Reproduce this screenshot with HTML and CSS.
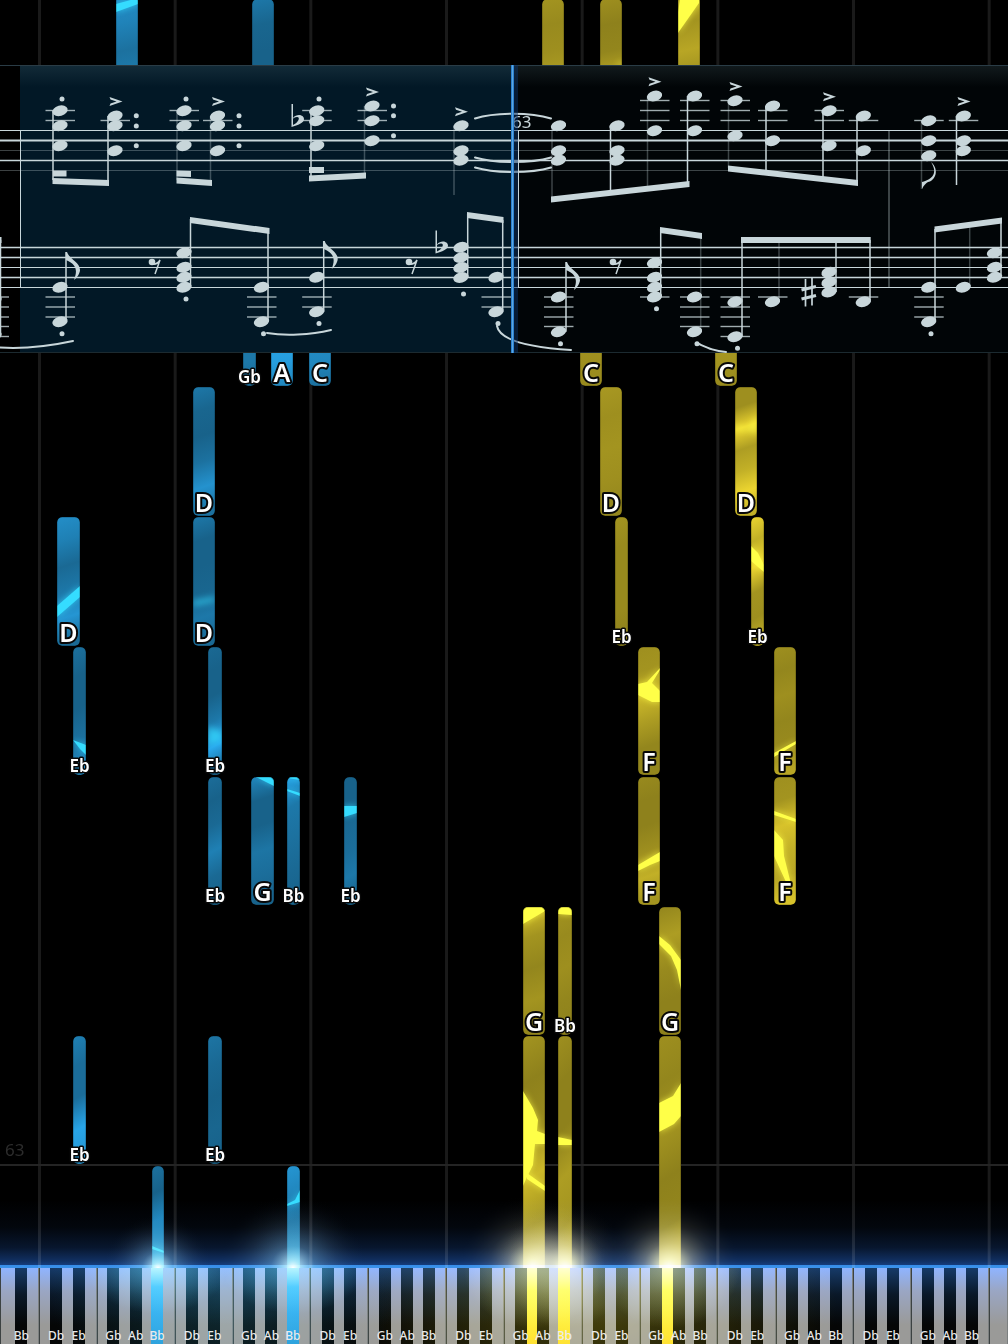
FILE: index.html
```html
<!DOCTYPE html>
<html lang="en">
<head>
    <meta charset="UTF-8">
    <meta name="viewport" content="width=device-width, initial-scale=1.0">
    <title>Piano roll</title>
    <link rel="stylesheet" href="styles.css">
</head>
<body>
    <main class="player">
        <svg class="roll" id="rollTop" viewBox="0 0 1008 65"></svg>
        <svg class="score" id="score" viewBox="0 65 1008 288"></svg>
        <svg class="roll" id="rollMain" viewBox="0 353 1008 915"></svg>
        <div class="keyboard" id="keyboard"></div>
    </main>
    <script src="script.js"></script>
</body>
</html>
```

FILE: styles.css
```css
body {
    margin: 0;
    background-color: #000;
    font-family: "Noto Sans", "Open Sans", sans-serif;
}
.player {
    display: flex;
    flex-direction: column;
    overflow: hidden;
}
.roll,
.score {
    display: block;
    width: 100%;
    height: auto;
}

/* falling notes */
.grid-line {
    stroke: #1a1a1a;
    stroke-width: 3;
}
.measure-line {
    stroke: #242424;
    stroke-width: 2;
}
.measure-label {
    fill: #2c2c2c;
    font-size: 17px;
}
.note-label {
    fill: #fff;
    stroke: #080808;
    stroke-width: 4px;
    stroke-linejoin: round;
    paint-order: stroke;
    font-size: 25px;
    font-weight: 600;
    text-anchor: middle;
}
.note-label.small {
    font-size: 17px;
    stroke-width: 3px;
}
.note-edge {
    fill: none;
    stroke: #000;
    stroke-opacity: 0.35;
}
.streak-left {
    fill: #35dcff;
}
.streak-right {
    fill: #ffff48;
}
.streak-soft {
    filter: blur(3px);
    opacity: 0.7;
}
.glow {
    mix-blend-mode: screen;
}

/* sheet music */
.ink {
    fill: #c8d6da;
}
.line {
    fill: none;
    stroke: #c8d6da;
}
.faint {
    stroke-opacity: 0.3;
}
.ledger {
    stroke-opacity: 0.8;
}
.score-label {
    fill: #c8d6da;
    font-size: 17px;
}

/* keyboard */
.keyboard {
    display: flex;
    position: relative;
    height: 76px;
    background-color: #333;
}
.slot {
    flex: 1;
    position: relative;
}
.key {
    box-sizing: border-box;
    height: 100%;
    margin: 0;
    padding: 0;
    border: none;
    font-family: "Noto Sans", "Open Sans", sans-serif;
}
.white {
    display: block;
    width: 100%;
    border-left: 1px solid #3c4242;
    border-right: 1px solid #7c8080;
    background: linear-gradient(#8fb4ff, #9aa6c4 30%, #9a9a98 75%);
}
.black {
    position: absolute;
    top: 0;
    left: 100%;
    z-index: 1;
    display: flex;
    align-items: flex-end;
    justify-content: center;
    width: 12px;
    margin-left: -6px;
    background: linear-gradient(#163a68, #0a1828 35%, #050606 75%);
    color: #e8e8e8;
    font-size: 12px;
    font-weight: 500;
    line-height: 16px;
}
.black.db {
    margin-left: -8px;
}
.black.eb {
    margin-left: -5px;
}
.black.gb {
    margin-left: -9px;
}
.black.bb {
    margin-left: -4px;
}
.white.left-hand,
.black.left-hand {
    background: linear-gradient(#a8ecff, #3cb8ff 25%, #2a9cda);
}
.white.right-hand,
.black.right-hand {
    background: linear-gradient(#ffffc0, #ffff48 30%, #ffdc30);
}
.keyboard::after {
    content: "";
    position: absolute;
    inset: 0;
    z-index: 2;
    pointer-events: none;
    mix-blend-mode: screen;
    background:
        radial-gradient(ellipse 7% 60% at 15.6% 0, rgba(90, 200, 240, 0.5), transparent),
        radial-gradient(ellipse 7% 60% at 29.1% 0, rgba(90, 200, 240, 0.5), transparent),
        radial-gradient(ellipse 7% 80% at 53% 0, rgba(240, 240, 120, 0.5), transparent),
        radial-gradient(ellipse 6% 80% at 56.2% 0, rgba(240, 240, 120, 0.4), transparent),
        radial-gradient(ellipse 7% 80% at 66.4% 0, rgba(240, 240, 120, 0.5), transparent),
        radial-gradient(ellipse 17% 180% at 22% 30%, rgba(20, 75, 90, 0.55), transparent),
        radial-gradient(ellipse 24% 180% at 59% 50%, rgba(115, 105, 10, 0.6), transparent);
}
```

FILE: script.js
```js
const SVG_NS = 'http://www.w3.org/2000/svg';

function add(parent, tag, attrs, text) {
    const el = document.createElementNS(SVG_NS, tag);
    for (const name in attrs) {
        el.setAttribute(name, attrs[name]);
    }
    if (text) {
        el.textContent = text;
    }
    parent.appendChild(el);
    return el;
}

/* ---------- falling notes ---------- */

const hands = {
    left: { dim: [24, 98, 138], bright: [42, 172, 242] },
    right: { dim: [142, 129, 28], bright: [246, 222, 50] }
};

function shade(hand, level) {
    const { dim, bright } = hands[hand];
    return 'rgb(' + dim.map((c, i) => Math.round(c + (bright[i] - c) * level)).join(',') + ')';
}

// x, top, width, bottom, hand, label, brightness from top to bottom, streaks, soft
const topNotes = [
    [116, -4, 22, 80, 'left', '', [0.6, 0.45, 0.2, 0.35], ['116,4 138,-2 138,4 116,12']],
    [252, -1, 22, 80, 'left', '', [0.3, 0.05, 0, 0]],
    [542, -1, 22, 80, 'right', '', [0.2, 0.1, 0.15, 0.3]],
    [600, -1, 22, 80, 'right', '', [0.15, 0, 0.05, 0.4], ['616,65 622,61 622,66'], 1],
    [678, -4, 22, 80, 'right', '', [0.5, 0.2, 0.4, 0.15], ['680,0 699,0 699,3 678,33 678,12']]
];

const notes = [
    [243, 340, 13, 386, 'left', 'Gb', [0.3, 0.3, 0.1]],
    [271, 340, 22, 386, 'left', 'A', [0.9, 0.8, 0.5]],
    [309, 340, 22, 386, 'left', 'C', [0.6, 0.5, 0.2]],
    [580, 340, 22, 386, 'right', 'C', [0.2, 0.15, 0.1]],
    [715, 340, 22, 386, 'right', 'C', [0.25, 0.2, 0.1]],
    [193, 387, 22, 516, 'left', 'D', [0.3, 0.05, 0, 0.2, 0.65, 0.2]],
    [600, 387, 22, 516, 'right', 'D', [0.25, 0.15, 0.2, 0.15, 0.05]],
    [735, 387, 22, 516, 'right', 'D', [0.15, 0.15, 0.9, 0.3, 0.5, 0.9, 0.5], ['735,426 749,427 757,416 757,434 749,430 735,431'], 1],
    [57, 517, 23, 646, 'left', 'D', [0.6, 0.4, 0.1, 0.3, 0.7, 0.1], ['57,606 80,586 80,597 57,617']],
    [193, 517, 22, 646, 'left', 'D', [0.3, 0, 0, 0.05, 0.3, 0.1], ['193,601 215,597 215,601 193,606'], 1],
    [615, 517, 13, 646, 'right', 'Eb', [0.2, 0.1, 0.1, 0.1, 0]],
    [751, 517, 13, 646, 'right', 'Eb', [0.9, 0.5, 0.9, 0.2, 0.15, 0.5], ['751,546 758,553 764,565 764,572 751,561']],
    [73, 647, 13, 775, 'left', 'Eb', [0.2, 0, 0, 0.2, 0.6], ['73,740 86,745 86,755 80,749']],
    [208, 647, 14, 775, 'left', 'Eb', [0.1, 0, 0, 0.3, 0.95, 0.1], ['208,727 222,731 222,741 208,745'], 1],
    [638, 647, 22, 775, 'right', 'F', [0.15, 0.2, 0.6, 0.3, 0.05, 0.05], ['638,684 647,682 660,668 660,670 652,683 660,691 660,702 652,702 638,695']],
    [774, 647, 22, 775, 'right', 'F', [0.15, 0.05, 0.15, 0.05, 0.1, 0.4], ['774,753 796,741 796,744 774,757']],
    [208, 777, 14, 905, 'left', 'Eb', [0.15, 0, 0.1, 0.4, 0.1, 0]],
    [251, 777, 23, 905, 'left', 'G', [0.5, 0, 0, 0.25, 0.15, 0], ['256,777 274,777 274,786']],
    [287, 777, 13, 905, 'left', 'Bb', [0.9, 0.3, 0.2, 0.1, 0], ['287,776 300,776 300,780 287,778', '287,789 300,793 300,796 287,791']],
    [344, 777, 13, 905, 'left', 'Eb', [0, 0, 0.1, 0.15, 0.3, 0], ['344,806 357,806 357,813 344,817']],
    [638, 777, 22, 905, 'right', 'F', [0.1, 0, 0, 0.15, 0.5, 0.2], ['638,865 660,852 660,861 650,865 638,871']],
    [774, 777, 22, 905, 'right', 'F', [0.15, 0.2, 0.7, 0.5, 0.4, 0.7], ['774,811 796,819 796,822 774,815', '774,830 783,840 784,856 791,884 786,882 774,856']],
    [523, 907, 22, 1035, 'right', 'G', [0.7, 0.2, 0.05, 0.2, 0.05], ['523,907 545,907 545,911 523,924']],
    [558, 907, 14, 1035, 'right', 'Bb', [0.2, 0.1, 0.15, 0.05, 0], ['558,907 572,907 572,915 558,914']],
    [659, 907, 22, 1035, 'right', 'G', [0.05, 0.3, 0.1, 0, 0], ['659,936 670,945 681,960 681,990 677,970 671,956 659,944']],
    [73, 1036, 13, 1164, 'left', 'Eb', [0.4, 0.15, 0.15, 0.9, 0.7]],
    [208, 1036, 14, 1164, 'left', 'Eb', [0.25, 0.1, 0, 0.05, 0]],
    [523, 1036, 22, 1280, 'right', '', [0.2, 0, 0.1, 0.6, 0.2, 0.5], ['523,1091 533,1108 538,1120 537,1131 545,1134 545,1144 535,1144 533,1165 527,1177 523,1186', '527,1173 545,1186 545,1191 527,1179']],
    [558, 1036, 14, 1280, 'right', '', [0.15, 0, 0, 0.3, 0.2, 0.6], ['558,1137 572,1140 572,1145 558,1145']],
    [659, 1036, 22, 1280, 'right', '', [0.15, 0.05, 0.2, 0, 0.05, 0.8], ['659,1103 673,1096 681,1083 681,1116 674,1124 659,1132']],
    [152, 1166, 12, 1280, 'left', '', [0.2, 0, 0.5, 0.5, 1], ['152,1246 164,1251 164,1253 152,1249']],
    [287, 1166, 13, 1280, 'left', '', [0.7, 0.5, 0.2, 0.3, 1], ['287,1204 295,1200 300,1190 300,1202 287,1206']]
];

let noteId = 0;

function drawNote(svg, defs, note) {
    const [x, top, width, bottom, hand, label, levels, streaks = [], soft] = note;
    const id = 'note' + noteId++;
    const gradient = add(defs, 'linearGradient', { id: id + 'fill', x1: 0, y1: 0, x2: 0.06, y2: 1 });
    levels.forEach((level, i) => {
        add(gradient, 'stop', { offset: i / (levels.length - 1), 'stop-color': shade(hand, level) });
    });
    const box = { x: x, y: top, width: width, height: bottom - top, rx: 5 };
    const clip = add(defs, 'clipPath', { id: id + 'clip' });
    add(clip, 'rect', box);

    const group = add(svg, 'g', { 'clip-path': `url(#${id}clip)` });
    add(group, 'rect', { ...box, fill: `url(#${id}fill)` });
    streaks.forEach(points => {
        add(group, 'polygon', { points: points, class: `streak-${hand} streak-soft` });
        if (!soft) {
            add(group, 'polygon', { points: points, class: `streak-${hand}` });
        }
    });
    add(group, 'rect', { ...box, class: 'note-edge' });

    if (label) {
        const small = label.length > 1;
        add(svg, 'text', {
            x: x + width / 2,
            y: bottom - (small ? 3 : 4),
            class: small ? 'note-label small' : 'note-label'
        }, label);
    }
}

function drawRoll(svg, list, top, bottom) {
    const defs = add(svg, 'defs', {});
    for (let i = 0; i < 8; i++) {
        const x = 39.5 + i * 135.67;
        add(svg, 'line', { x1: x, x2: x, y1: top, y2: bottom, class: 'grid-line' });
    }
    if (bottom > 1165) {
        add(svg, 'line', { x1: 0, x2: 1008, y1: 1165, y2: 1165, class: 'measure-line' });
        add(svg, 'text', { x: 5, y: 1156, class: 'measure-label' }, '63');
    }
    list.forEach(note => drawNote(svg, defs, note));
    return defs;
}

function radial(defs, id, stops) {
    const gradient = add(defs, 'radialGradient', { id: id });
    stops.forEach(([offset, color, opacity]) => {
        add(gradient, 'stop', { offset: offset, 'stop-color': color, 'stop-opacity': opacity });
    });
}

drawRoll(document.getElementById('rollTop'), topNotes, 0, 65);

const rollMain = document.getElementById('rollMain');
const defs = drawRoll(rollMain, notes, 353, 1268);

// light coming off the keyboard
const haze = add(defs, 'linearGradient', { id: 'haze', x1: 0, y1: 0, x2: 0, y2: 1 });
[[0, 0], [0.4, 0.08], [0.7, 0.28], [0.9, 0.6], [1, 0.9]].forEach(([offset, opacity]) => {
    add(haze, 'stop', { offset: offset, 'stop-color': '#1c50a4', 'stop-opacity': opacity });
});
add(rollMain, 'rect', { x: 0, y: 1200, width: 1008, height: 68, fill: 'url(#haze)', class: 'glow' });
add(rollMain, 'rect', { x: 0, y: 1265, width: 1008, height: 3, fill: '#2468d0', class: 'glow' });

radial(defs, 'glowLeft', [[0, '#fff', 1], [0.1, '#b0e4ff', 0.8], [0.3, '#6aa0c8', 0.45], [0.6, '#50708a', 0.2], [1, '#000', 0]]);
radial(defs, 'glowRight', [[0, '#fff', 1], [0.12, '#ffffa8', 0.85], [0.35, '#c8c090', 0.45], [0.6, '#807a60', 0.2], [1, '#000', 0]]);
[[158, 'Left', 54], [293, 'Left', 74], [533, 'Right', 74], [565, 'Right', 66], [669, 'Right', 72]].forEach(([x, side, r]) => {
    add(rollMain, 'ellipse', { cx: x, cy: 1268, rx: r, ry: r, fill: `url(#glow${side})`, class: 'glow' });
});

/* ---------- sheet music ---------- */

const score = document.getElementById('score');
const scoreDefs = add(score, 'defs', {});
const sheen = add(scoreDefs, 'linearGradient', { id: 'sheen', x1: 0, y1: 0, x2: 0, y2: 1 });
add(sheen, 'stop', { offset: 0, 'stop-color': '#7aa0a8', 'stop-opacity': 0.14 });
add(sheen, 'stop', { offset: 1, 'stop-color': '#7aa0a8', 'stop-opacity': 0 });

add(score, 'rect', { x: 0, y: 65, width: 1008, height: 288, fill: '#010507' });
add(score, 'rect', { x: 0, y: 65, width: 20, height: 288, fill: '#000' });
add(score, 'rect', { x: 20, y: 65, width: 493, height: 288, fill: '#021826' });
add(score, 'rect', { x: 20, y: 65, width: 988, height: 22, fill: 'url(#sheen)' });
add(score, 'rect', { x: 0, y: 65, width: 1008, height: 1, fill: '#2a3c46' });
add(score, 'rect', { x: 0, y: 352, width: 1008, height: 1, fill: '#1c2a30' });

function line(x1, y1, x2, y2, width, style) {
    add(score, 'line', { x1, y1, x2, y2, 'stroke-width': width, class: style ? 'line ' + style : 'line' });
}

function beam(x1, y1, x2, y2) {
    add(score, 'polygon', { points: `${x1},${y1} ${x2},${y2} ${x2},${y2 + 6} ${x1},${y1 + 6}`, class: 'ink' });
}

function curve(d) {
    add(score, 'path', { d: d, 'stroke-width': 2, 'stroke-linecap': 'round', class: 'line' });
}

// staves and bar lines
[[130.5, 1], [140.5, 2], [150.5, 1, 'faint'], [160.5, 1.5], [170.5, 1, 'faint'],
 [247.5, 1.3], [257.5, 1.3], [267.5, 1], [277.5, 1.5], [287.5, 1]].forEach(([y, width, style]) => {
    line(0, y, 1008, y, width, style);
});
line(20.5, 130, 20.5, 287, 1);
line(518.5, 130, 518.5, 287, 1);
line(889, 130, 889, 287, 2, 'faint');

// x, note heads, stem x, stem end, faint stem
const chords = [
    [60, [110.7, 125.7, 145.7], 53, 180],
    [115, [116, 125.7, 150.7], 108, 182],
    [184, [110.7, 125.7, 145.7], 177, 180, 1],
    [217.5, [116, 125.7, 150.7], 210.5, 182, 1],
    [316.7, [110.7, 120.7, 145.7], 311, 178],
    [372, [106, 120.7, 140.7], 364.5, 175, 1],
    [461, [125.7, 150.7, 160.3], 454, 195, 1],
    [558.5, [125.7, 150.7, 160.3], 552, 199, 1],
    [617, [125.7, 150.7, 160.3], 610.5, 193],
    [654.5, [96, 130.7], 647.5, 188, 1],
    [694.5, [96, 130.7], 687.5, 184],
    [735, [100.7, 135.7], 728.5, 168, 1],
    [772.5, [106, 140.7], 766, 172],
    [829, [110.7, 145.7], 823, 178],
    [863.3, [116, 150.7], 857, 183],
    [928.7, [120.7, 140.7, 155.7], 921.5, 189, 1],
    [963.3, [116, 140.7, 150.7], 956.5, 185],
    [-6, [300, 335.5], 0.5, 240],
    [60, [287.3, 321.7], 66, 252],
    [184, [252.7, 267.3, 277.3, 287.3], 190.5, 219],
    [261.5, [287.3, 321.7], 268, 230],
    [316.7, [277.3, 311.7], 323.7, 241],
    [461, [247.3, 257.5, 267.5, 277.5], 467.7, 214],
    [496, [277.3, 311.7], 502.7, 220],
    [558.5, [297, 331.7], 566, 262],
    [654.5, [262.7, 277.3, 287.3, 297], 660.7, 229],
    [694.5, [297, 331.7], 700.7, 235, 1],
    [735, [301.7, 336.7], 742, 240],
    [772.5, [301.7], 779, 240, 1],
    [829, [272.3, 282.3, 292], 836, 240],
    [863.3, [301.7], 870, 240],
    [928.7, [287.3, 321.7], 935, 229],
    [963.3, [287.3], 969.7, 224, 1],
    [994.5, [252.7, 267.3, 277.3], 1001, 219]
];

chords.forEach(([x, heads, stemX, stemEnd, faint]) => {
    const high = heads[0];
    const low = heads[heads.length - 1];
    // ledger lines above the treble staff and below the bass staff
    [120.5, 110.5, 100.5].filter(y => y >= high - 1).forEach(y => line(x - 14.5, y, x + 15, y, 1.4, 'ledger'));
    if (low > 200) {
        [297, 307, 317, 326.5, 336.5].filter(y => y <= low + 1).forEach(y => line(x - 14.5, y, x + 15, y, 1.4, 'ledger'));
    }
    line(stemX, stemEnd > low ? high : low, stemX, stemEnd, 1.5, faint && 'faint');
    heads.forEach(y => {
        add(score, 'ellipse', { cx: x, cy: y, rx: 7.8, ry: 5.2, transform: `rotate(-16 ${x} ${y})`, class: 'ink' });
    });
});

beam(52.5, 178, 109, 180);
beam(53, 170.5, 66.5, 170.5);
beam(176.5, 177.5, 212, 180);
beam(176.5, 170.5, 191, 171);
beam(309, 175.5, 366, 172.5);
beam(309, 167, 324, 167);
beam(551, 196.5, 689.5, 181);
beam(728, 165.5, 858, 180);
beam(190, 217, 269.5, 228);
beam(467, 212, 503.5, 217);
beam(660, 227, 702, 233);
beam(741, 237, 870.7, 237);
beam(934.5, 226.5, 1002, 217.5);
beam(0, 237, 1.5, 237);

// staccato and augmentation dots
[[62, 99], [186, 99], [319, 99], [62, 333.7], [186, 299], [263.5, 333.7], [319, 323.5], [463.5, 294],
 [498, 323.5], [560.5, 343.7], [656.5, 308.7], [697, 343.7], [737.5, 348.3], [931, 333.7],
 [136.3, 115.7], [136.3, 126], [136.3, 145.7], [239, 115.7], [239, 126], [239, 145.7],
 [393.5, 106], [393.5, 115.7], [393.5, 135.7]].forEach(([x, y]) => {
    add(score, 'circle', { cx: x, cy: y, r: 2.5, class: 'ink' });
});

// accents
[[115.5, 101.5], [218, 101.5], [372, 92], [461, 111.7], [654.5, 81.7], [735.5, 86.5],
 [829, 96.7], [963.5, 101.5]].forEach(([x, y]) => {
    add(score, 'path', { d: `M${x - 6},${y - 4.5} L${x + 7},${y} L${x - 6},${y + 4.5} L${x - 5},${y + 2} L${x + 1},${y} L${x - 5},${y - 2} Z`, class: 'ink' });
});

// flats
[[292, 104], [436, 230.5]].forEach(([x, y]) => {
    add(score, 'path', {
        d: `M${x - 0.5},${y} h1.500 v14 c4,-5 11,-3 11,1 c0,4 -6,6 -12.500,8 z M${x + 1},${y + 15} v6 c5,-2 8,-8 4,-8 c-2,0 -4,1 -4,2 z`,
        'fill-rule': 'evenodd',
        class: 'ink'
    });
});

// sharp
line(805.5, 279, 805.5, 306.5, 1.7);
line(812, 278, 812, 305.5, 1.7);
line(801.5, 290, 816, 286.5, 3);
line(801.5, 299, 816, 295.5, 3);

// eighth rests
[[149, 259], [406, 259], [610, 259]].forEach(([x, y]) => {
    add(score, 'circle', { cx: x + 3, cy: y + 3, r: 3.3, class: 'ink' });
    add(score, 'path', { d: `M${x + 3},${y + 5} q5,1 8,-4 l-5,14`, 'stroke-width': 1.5, class: 'line' });
});

// flags
[[66, 252], [323.7, 241], [566, 262]].forEach(([x, y]) => {
    add(score, 'path', { d: `M${x},${y} h1 c2,7 13,10 13,18 c0,3 -3,8 -6,10 c3,-8 4,-15 -8,-20 z`, class: 'ink' });
});
add(score, 'path', { d: 'M922,189 v-7 c11,-3 16,-9 9,-20 c9,8 4,19 -3,20 c-2,1 -4,3 -6,7 z', class: 'ink' });

// ties and slurs
curve('M475,118.500 C495,112 531,112 551,118.500');
curve('M475,157.500 C495,163.500 531,163.500 551,157.500');
curve('M475,167.500 C495,173.500 531,173.500 551,167.500');
curve('M0,347.500 C25,349 50,346 73,341');
curve('M267,333 C285,336 310,335 331,330');
curve('M497,326 C500,343 540,348 571,350');
curve('M699,344 C708,348 714,351 726,352');

add(score, 'text', { x: 512, y: 128, class: 'score-label' }, '63');

// playhead
add(score, 'rect', { x: 511, y: 65, width: 7, height: 288, fill: '#0c3468', opacity: 0.5 });
add(score, 'rect', { x: 511, y: 65, width: 3, height: 288, fill: '#2c80d0' });
add(score, 'rect', { x: 512, y: 65, width: 1, height: 288, fill: '#5ca8e0' });

/* ---------- keyboard ---------- */

const keyboard = document.getElementById('keyboard');
const octave = ['A', 'B', 'C', 'D', 'E', 'F', 'G'];
const flats = { A: 'Bb', C: 'Db', D: 'Eb', F: 'Gb', G: 'Ab' };
const pressed = { 'Bb7': 'left-hand', 'Bb14': 'left-hand', 'G27': 'right-hand', 'Bb28': 'right-hand', 'G34': 'right-hand' };

function addKey(slot, name, index, type) {
    const key = document.createElement('button');
    key.type = 'button';
    key.className = `key ${type} ${pressed[name + index] || ''}`;
    key.setAttribute('aria-label', name);
    if (type !== 'white') {
        key.textContent = name;
    }
    slot.appendChild(key);
}

for (let i = 0; i < 52; i++) {
    const name = octave[i % 7];
    const slot = document.createElement('div');
    slot.className = 'slot';
    addKey(slot, name, i, 'white');
    if (flats[name] && i < 51) {
        addKey(slot, flats[name], i, 'black ' + flats[name].toLowerCase());
    }
    keyboard.appendChild(slot);
}
```
